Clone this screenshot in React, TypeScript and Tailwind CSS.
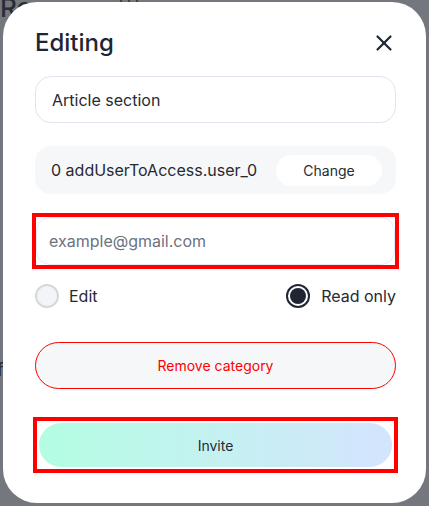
import { X } from "lucide-react";

const font = { fontFamily: "Inter, 'Noto Sans', sans-serif" };

const App = () => {
  return (
    <div
      className="relative w-[429px] h-[506px] overflow-hidden bg-[#75777f]"
      style={font}
    >
      {/* faded page behind the overlay */}
      <div className="absolute left-0 top-[-12px] text-[26px] font-medium text-[#2a2d35]">
        Re
      </div>
      <div className="absolute left-[118px] top-[-12px] text-[18px] text-[#2a2d35] tracking-[2px]">
        |||
      </div>
      <div className="absolute left-[-3px] top-[356px] text-[18px] text-[#2a2d35]">
        f
      </div>

      <div className="absolute left-[3px] top-[2px] w-[423px] h-[501px] bg-white rounded-[34px] pl-8 pr-[30px] pt-[26px] flex flex-col">
        <div className="flex items-center justify-between h-[30px]">
          <h2 className="text-[24px] font-medium text-[#1f2533] leading-none">
            Editing
          </h2>
          <X className="w-[26px] h-[26px] text-[#1f2533] mr-[-1px]" strokeWidth={2} />
        </div>

        <div className="mt-[18px] h-[47px] rounded-[16px] border border-[#e3e2ef] flex items-center px-4 text-[16px] text-[#262a33]">
          Article section
        </div>

        <div className="mt-[23px] h-[48px] rounded-[16px] bg-[#f6f7f9] flex items-center justify-between pl-4 pr-[14px] text-[16px] text-[#262a33]">
          <span>0 addUserToAccess.user_0</span>
          <button className="w-[106px] h-[31px] rounded-full bg-white text-[14px] text-[#262a33]">
            Change
          </button>
        </div>

        <div className="mt-[19px] mx-[-3px] border-[4px] border-[#ff0000] h-[56px]">
          <div className="h-full rounded-[14px] border border-[#e8e7f1] flex items-center px-[12px] text-[16px] text-[#6b7280]">
            example@gmail.com
          </div>
        </div>

        <div className="mt-[15px] flex items-center justify-between text-[16px] text-[#262a33]">
          <label className="flex items-center gap-[10px]">
            <span className="w-[24px] h-[24px] rounded-full border-2 border-[#d6d8de] bg-[#f3f4f7]" />
            Edit
          </label>
          <label className="flex items-center gap-[11px]">
            <span className="w-[24px] h-[24px] rounded-full border-2 border-[#1f2533] bg-white flex items-center justify-center">
              <span className="w-[16px] h-[16px] rounded-full bg-[#1f2533]" />
            </span>
            Read only
          </label>
        </div>

        <button className="mt-[34px] h-[47px] rounded-full border border-[#ff0000] bg-[#f6f7f9] text-[14px] text-[#ff0000]">
          Remove category
        </button>

        <div className="mt-[28px] mx-[-2px] border-[4px] border-[#ff0000] h-[56px] p-[2px]">
          <button className="w-full h-full rounded-full bg-gradient-to-r from-[#b3fde2] to-[#d4e4fe] text-[14px] text-[#262a33]">
            Invite
          </button>
        </div>
      </div>
    </div>
  );
};

export default App;
